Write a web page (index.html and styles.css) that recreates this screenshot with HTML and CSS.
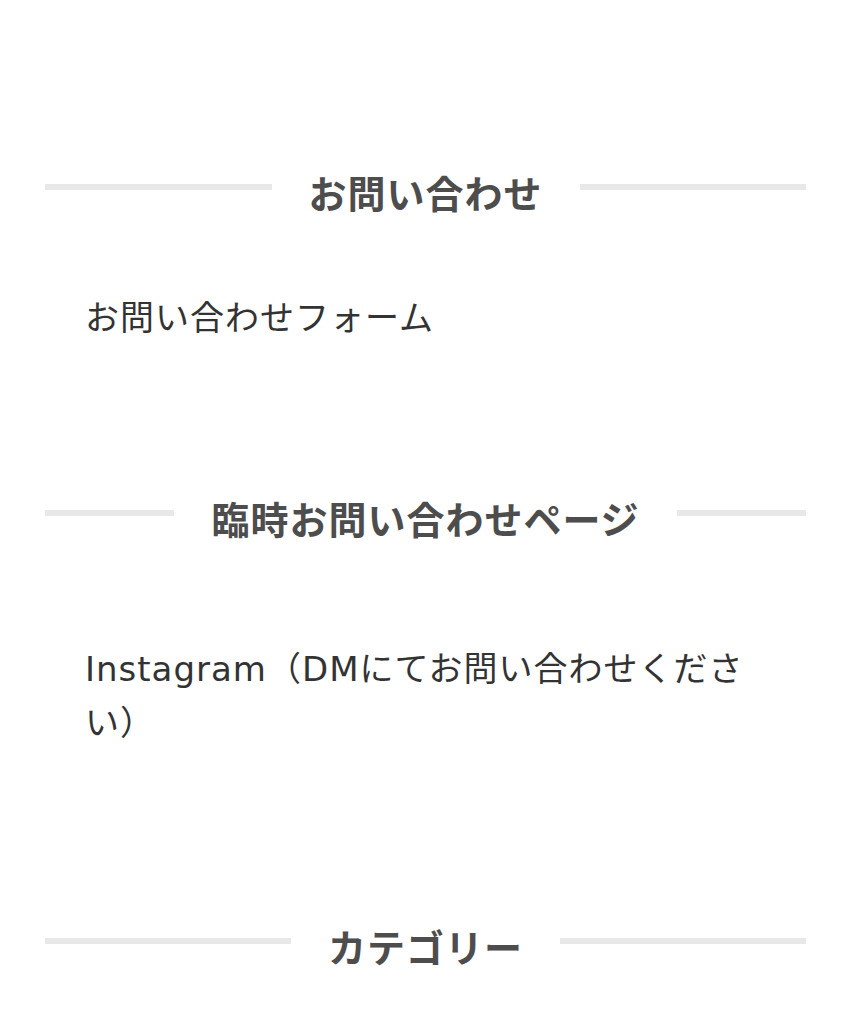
FILE: index.html
```html
<!DOCTYPE html>
<html lang="ja">
<head>
<meta charset="utf-8">
<title>Sidebar</title>
<link rel="stylesheet" href="styles.css">
</head>
<body>
<div class="sidebar">
  <section class="widget widget-contact">
    <h2 class="widget-title"><span>お問い合わせ</span></h2>
    <ul class="widget-list">
      <li>お問い合わせフォーム</li>
    </ul>
  </section>
  <section class="widget widget-temp">
    <h2 class="widget-title"><span>臨時お問い合わせページ</span></h2>
    <p class="widget-text">Instagram（DMにてお問い合わせください）</p>
  </section>
  <section class="widget widget-category">
    <h2 class="widget-title"><span>カテゴリー</span></h2>
  </section>
</div>
</body>
</html>
```
FILE: styles.css
```css
html, body {
  margin: 0;
  padding: 0;
  background: #ffffff;
}
body {
  font-family: "DejaVu Sans", "Noto Sans CJK JP", sans-serif;
  color: #333333;
}
.sidebar {
  padding: 165px 47px 0 45px;
}
.widget-title {
  display: flex;
  align-items: center;
  gap: 37px;
  margin: 0;
  font-family: "Noto Sans CJK JP", sans-serif;
  font-size: 38px;
  line-height: 54px;
  letter-spacing: 1px;
  font-weight: 700;
  color: #4d4d4d;
}
.widget-title::before,
.widget-title::after {
  content: "";
  flex: 1;
  height: 6px;
  background: #e8e8e8;
  margin-top: -11px;
}
.widget-list {
  list-style: none;
  margin: 72px 0 0;
  padding: 0 40px;
  font-size: 34px;
  line-height: 54px;
  letter-spacing: 1px;
}
.widget-text {
  margin: 97px 0 0;
  padding: 0 40px;
  font-size: 34px;
  line-height: 54px;
  letter-spacing: 1px;
}
.widget-contact {
  margin-bottom: 146px;
}
.widget-temp {
  margin-bottom: 169px;
}
```
